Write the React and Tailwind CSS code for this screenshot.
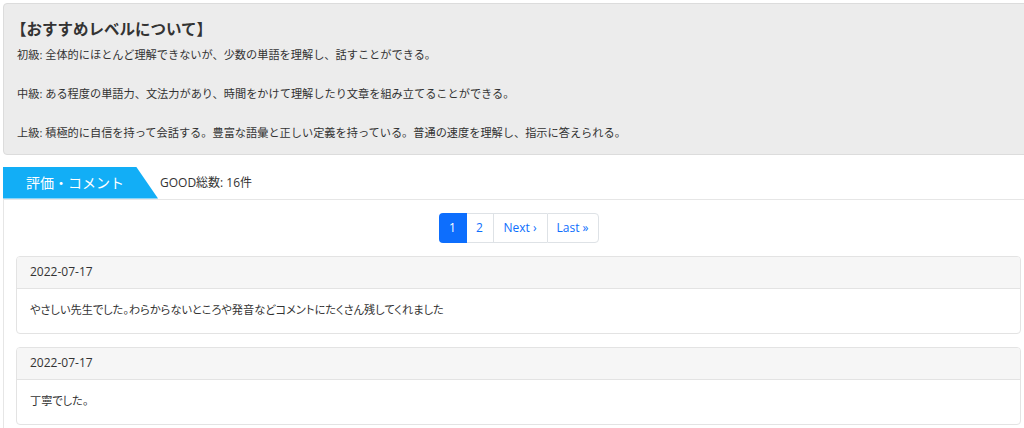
const Card = ({ date, text }) => (
  <div className="border border-[#e3e3e3] rounded-[4px] overflow-hidden">
    <div className="h-[32px] flex items-center px-[13px] bg-[#f6f6f6] border-b border-[#e3e3e3] text-[12px]">
      {date}
    </div>
    <div className="h-[44px] flex items-center px-[13px] text-[11.2px] [font-feature-settings:'palt']">
      {text}
    </div>
  </div>
);

const Pager = () => (
  <div className="flex justify-center">
    <div className="flex h-[30px] text-[12px] text-[#0d6efd]">
      <span className="w-[28px] flex items-center justify-center bg-[#0d6efd] text-white rounded-l-[4px]">1</span>
      <span className="w-[26px] flex items-center justify-center border-y border-[#dee2e6]">2</span>
      <span className="w-[54px] flex items-center justify-center border border-r-0 border-[#dee2e6]">Next ›</span>
      <span className="w-[52px] flex items-center justify-center border border-[#dee2e6] rounded-r-[4px]">Last »</span>
    </div>
  </div>
);

export default function App() {
  return (
    <div className="w-[1024px] h-[428px] overflow-hidden bg-white text-[#333] font-['Open_Sans','Noto_Sans_CJK_JP',sans-serif]">
      <div className="w-[1033px] pl-[3px] pt-[3px]">
        <div className="bg-[#ececec] border border-[#dcdcdc] rounded-[4px] pt-[10px] pb-[11px] px-[13px]">
          <div className="text-[15.5px] font-bold leading-[28px] font-['Noto_Sans_CJK_JP',sans-serif] -ml-[6px]">【おすすめレベルについて】</div>
          <div className="mt-[3px] text-[11.2px] leading-[19.5px]">
            初級: 全体的にほとんど理解できないが、少数の単語を理解し、話すことができる。
            <br />
            <br />
            中級: ある程度の単語力、文法力があり、時間をかけて理解したり文章を組み立てることができる。
            <br />
            <br />
            上級: 積極的に自信を持って会話する。豊富な語彙と正しい定義を持っている。普通の速度を理解し、指示に答えられる。
          </div>
        </div>

        <div className="mt-[12px] flex items-center h-[32px]">
          <div className="w-[155px] h-full bg-[#12aef6] text-white text-[14px] flex items-center pl-[23px] [clip-path:polygon(0_0,133px_0,100%_100%,0_100%)]">
            評価・コメント
          </div>
          <div className="ml-[2px] text-[12px]">GOOD総数: 16件</div>
        </div>

        <div className="border-l border-t border-[#e6e6e6] px-[12px] pt-[13px] pb-[20px]">
          <Pager />
          <div className="mt-[13px] flex flex-col gap-[13px]">
            <Card date="2022-07-17" text="やさしい先生でした。わらからないところや発音などコメントにたくさん残してくれました" />
            <Card date="2022-07-17" text="丁寧でした。" />
          </div>
        </div>
      </div>
    </div>
  );
}
